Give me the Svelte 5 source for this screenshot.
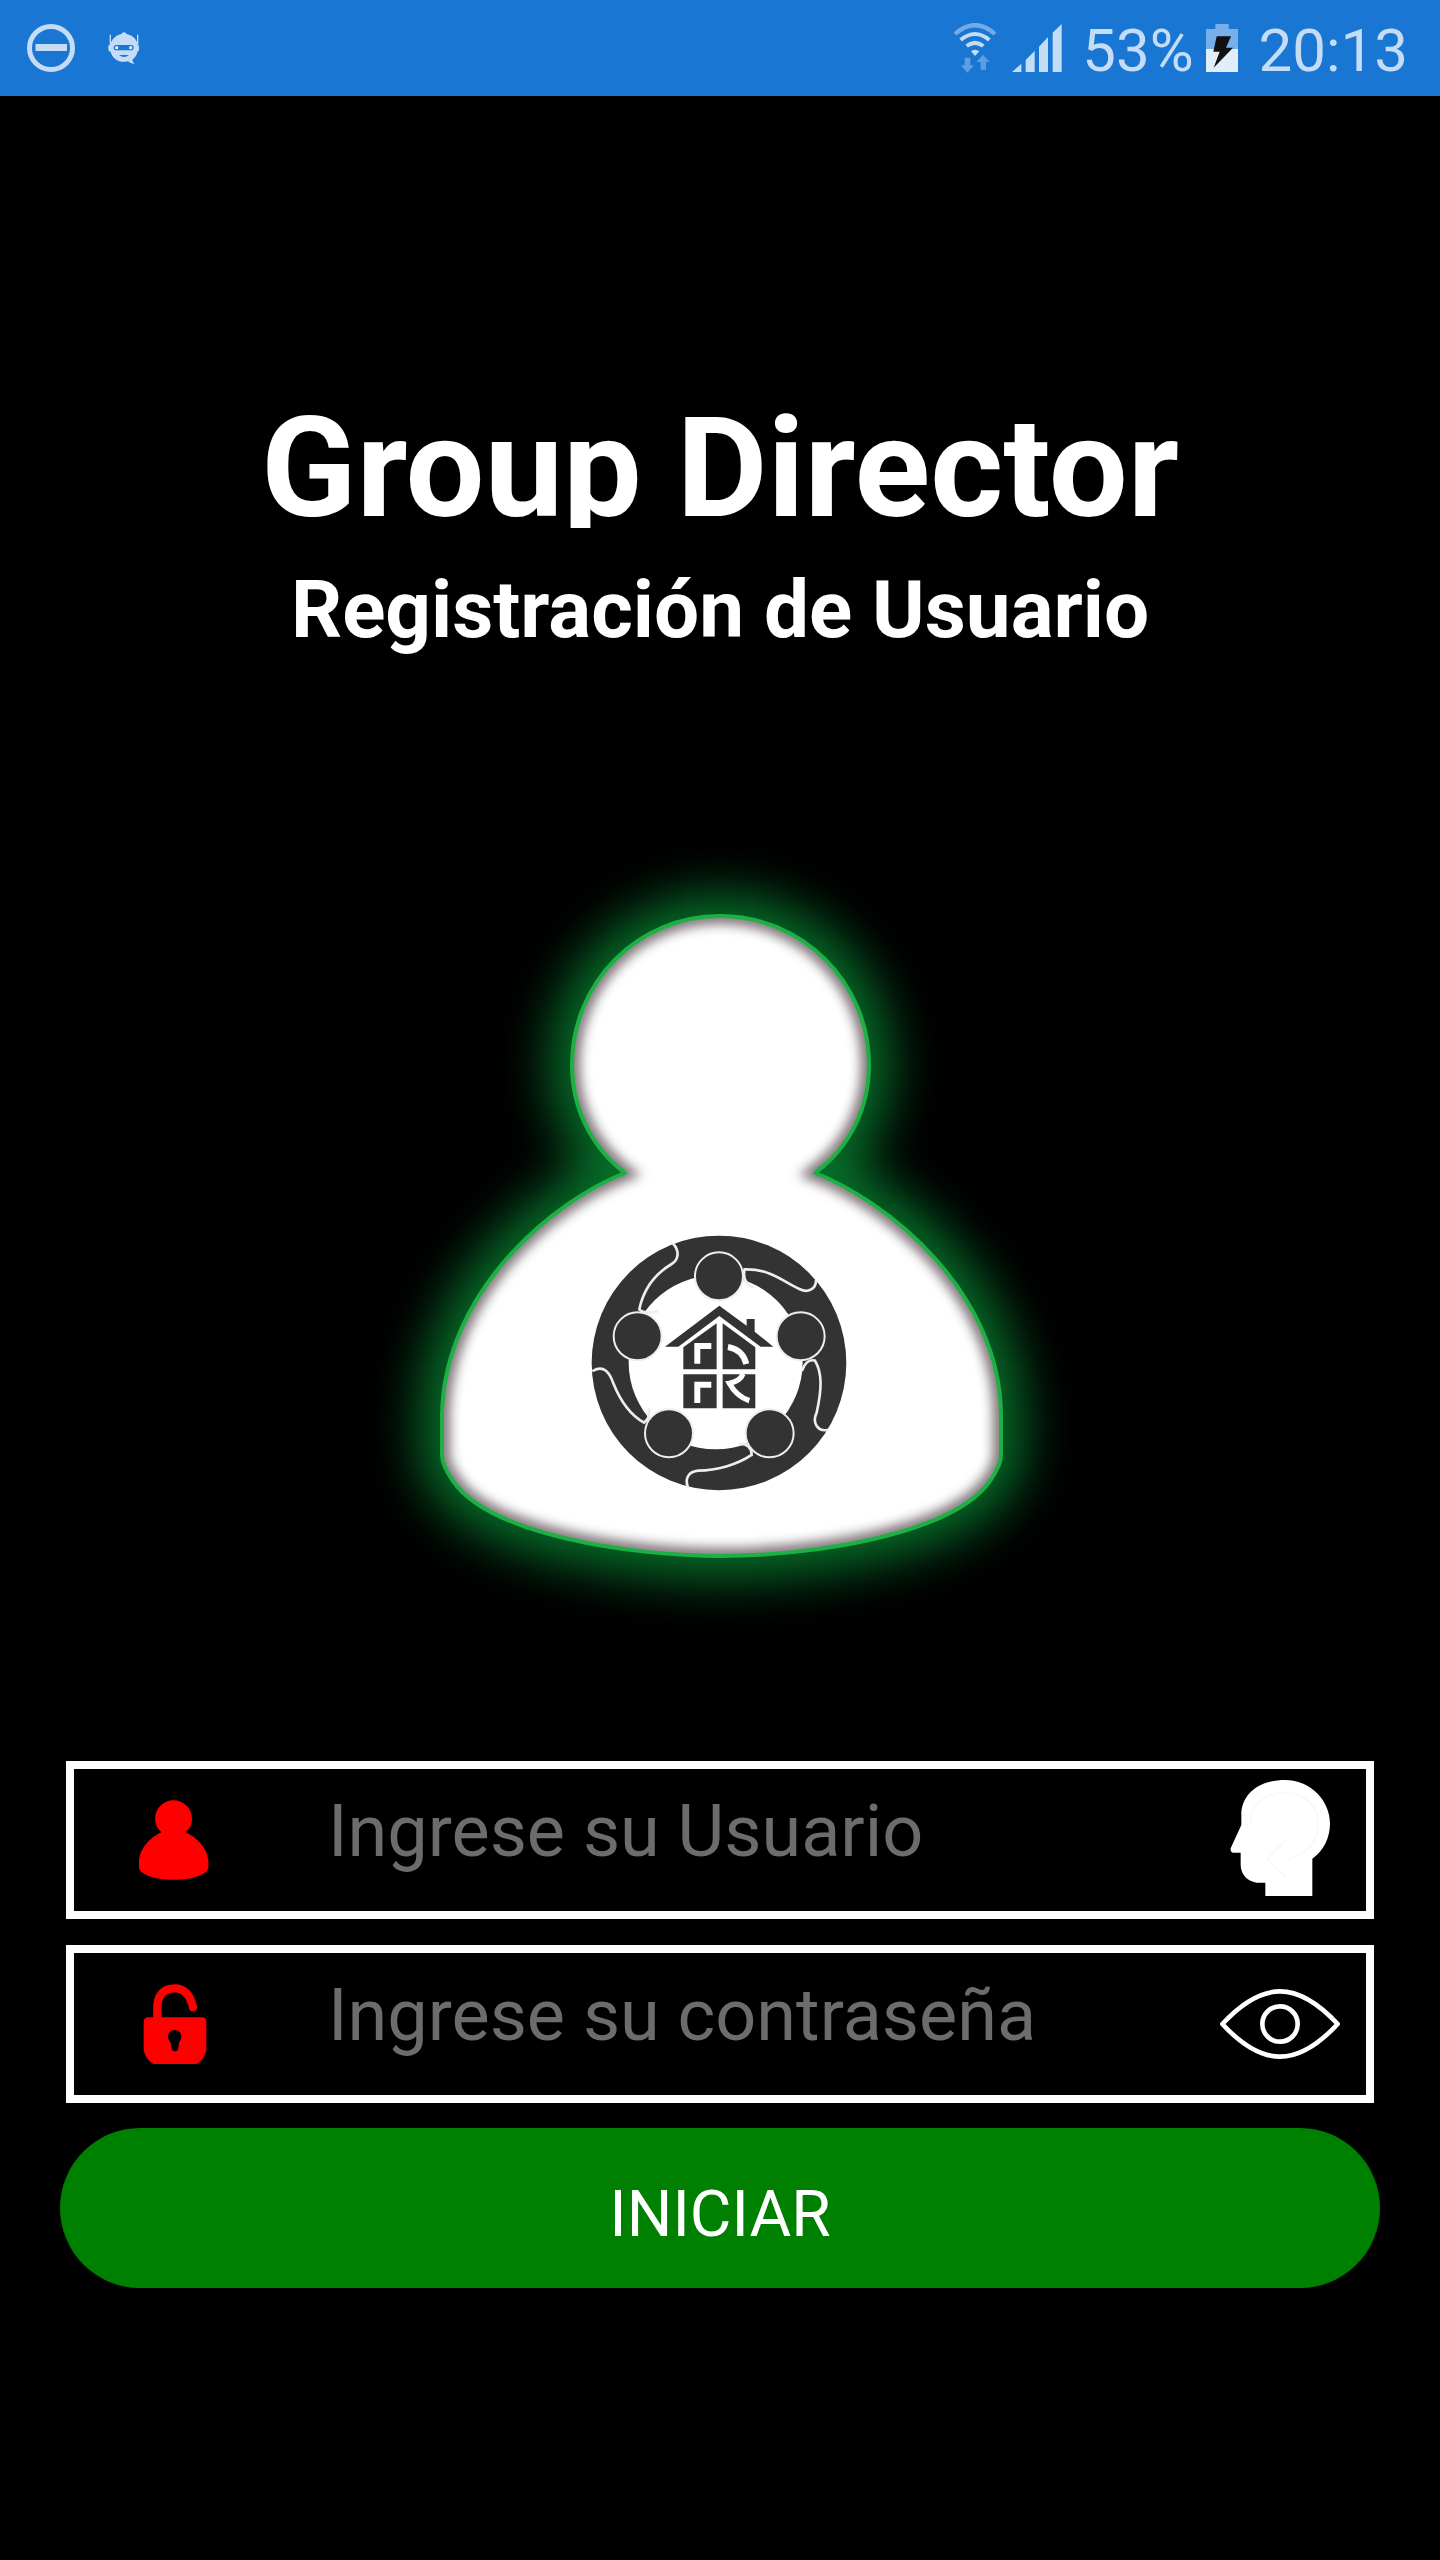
<script>
	let user = $state('');
	let password = $state('');
	let showPassword = $state(false);

	// same silhouette for the big logo and the user field
	const person =
		'M265 333C231 307 212 268 212 225C212 142 278 76 360 76C442 76 509 142 509 225C509 268 490 307 455 333C525 360 640 450 641 575V615C641 622 637 631 630 641C592 695 450 716 361 716C272 716 130 695 93 641C86 631 82 622 82 615V575C84 450 195 360 265 333Z';

	const heads = [
		[447, 199],
		[692, 379],
		[599, 670],
		[297, 670],
		[203, 379]
	];

	function submit(event) {
		event.preventDefault();
	}
</script>

<svelte:head>
	<title>Group Director</title>
</svelte:head>

<div class="app">
	<header class="status">
		<div class="status-side">
			<svg class="dnd" viewBox="0 0 48 48">
				<circle cx="24" cy="24" r="21.5" fill="none" stroke="#c5dcf6" stroke-width="5" />
				<path d="M8.500 20H40V27H8.500Z" fill="#c5dcf6" />
			</svg>
			<svg class="bot" viewBox="324 93 96 99">
				<g fill="#c5dcf6">
					<path d="M329 101H333V130H329ZM411 101H415V130H411Z" />
					<rect x="325" y="130" width="92" height="22" rx="8" />
					<path d="M364 99Q366 94 372 94T380 99C402 103 414 120 414 140C414 156 408 168 397 176Q398 183 404 188Q392 189 384 181C356 188 330 170 330 140C330 120 344 103 364 99Z" />
				</g>
				<rect x="341" y="132" width="60" height="16" rx="8" fill="#1976d2" />
				<circle cx="350" cy="140" r="5" fill="#e4effb" />
				<circle cx="392" cy="140" r="5" fill="#e4effb" />
				<path d="M357 162H387Q372 174 357 162Z" fill="#1976d2" />
			</svg>
		</div>
		<div class="status-side">
			<svg class="wifi" viewBox="70 68 132 150">
				<g fill="none" stroke="#c5dcf6">
					<path d="M76 101Q136 48 196 101" stroke="#72abe6" stroke-width="13" />
					<path d="M93 119Q136 83 179 119" stroke-width="12" />
					<path d="M111 137Q136 118 161 137" stroke-width="12" />
				</g>
				<path d="M124 153Q136 144 149 153L136 167Z" fill="#c5dcf6" />
				<path d="M105 172H122V195H133L113 217L93 195H105ZM153 208H169V185H180L160 163L140 185H153Z" fill="#5c9fe2" />
			</svg>
			<svg class="signal" viewBox="247 72 150 144">
				<path d="M247 216L275 191V216ZM288 180L315 153V216H288ZM328 140L355 111V216H328ZM369 98L396 72V216H369Z" fill="#c5dcf6" />
			</svg>
			<span class="percent">53%</span>
			<svg class="battery" viewBox="828 72 96 144">
				<path d="M828 87H856V72H896V87H924V147H828Z" fill="#76afe9" />
				<path d="M828 147H924V216H828Z" fill="#e2edfb" />
				<path d="M860 109H903L888 143H909L851 203L869 155H850Z" fill="#111" />
			</svg>
			<time>20:13</time>
		</div>
	</header>

	<main>
		<h1>Group Director</h1>
		<h2>Registración de Usuario</h2>

		<svg class="logo" viewBox="0 0 720 800" role="img" aria-label="Group Director">
			<defs>
				<filter id="glow" x="-30%" y="-30%" width="160%" height="160%" color-interpolation-filters="sRGB">
					<feGaussianBlur stdDeviation="25" />
				</filter>
				<filter id="edge" color-interpolation-filters="sRGB">
					<feGaussianBlur stdDeviation="6" />
				</filter>
				<clipPath id="body"><path d={person} /></clipPath>
			</defs>
			<path d={person} fill="#06702a" stroke="#06702a" stroke-width="44" stroke-linejoin="round" filter="url(#glow)" />
			<path d={person} fill="#fff" />
			<g clip-path="url(#body)">
				<path d={person} fill="none" stroke="#7d7277" stroke-width="16" filter="url(#edge)" />
			</g>
			<path d={person} fill="none" stroke="#1cb045" stroke-width="4" stroke-linejoin="round" />

			<!-- people holding hands round the house -->
			<g transform="translate(210 370) scale(0.3333)">
				<circle cx="447" cy="459" r="382" fill="#333" />
				<circle cx="437" cy="457" r="261" fill="#fff" />
				<g fill="none" stroke="#eee" stroke-width="8" stroke-linecap="round">
					<path d="M310 102C330 125 325 150 305 162C250 195 220 240 208 298Q222 312 262 304" />
					<path d="M738 212C738 235 715 250 690 238C640 215 600 176 524 178Q515 215 548 232" />
					<path d="M772 660C745 665 725 640 740 608C755 540 758 490 735 452Q710 445 697 480" />
					<path d="M353 830C345 805 355 785 385 782C440 782 500 765 545 735Q545 702 510 702" />
					<path d="M70 482C100 465 118 485 130 520C150 570 180 615 222 638Q240 625 238 598" />
				</g>
				{#each heads as [cx, cy]}
					<circle {cx} {cy} r="72" fill="#333" stroke="#eee" stroke-width="6" />
				{/each}
				<g fill="#333">
					<path d="M285 410L448 287L530 347V327H554V365L610 410H572L448 318L325 410Z" />
					<path d="M340 412L440 340V478H340ZM458 340L556 412V478H458ZM340 493H440V595H340ZM458 493H556V595H458Z" />
				</g>
				<g fill="none" stroke="#fff" stroke-width="18">
					<path d="M382 461V408H424M382 579V524H424" />
					<path d="M474 411C505 416 522 435 529 462" />
					<path d="M519 492Q510 514 478 520Q500 560 538 572" stroke-width="16" />
				</g>
			</g>
		</svg>

		<form onsubmit={submit}>
			<div class="field">
				<label for="user">
					<svg viewBox="42 74 644 644"><path d={person} fill="#f00" /></svg>
				</label>
				<input id="user" type="text" placeholder="Ingrese su Usuario" aria-label="Usuario" bind:value={user} />
				<button type="button" class="action" aria-label="Recordar usuario">
					<svg viewBox="120 120 360 360">
						<path d="M184 215C192 150 250 120 315 120C395 120 450 185 450 250C450 295 430 333 397 356V468H256V428H230C200 424 182 400 182 375V338H158Q150 335 152 325L184 255Z" fill="#fff" />
						<path d="M212 245C212 195 260 157 315 158C380 160 417 205 415 250C415 310 375 345 322 358M318 300L262 357L318 412" fill="none" stroke="#f9f9f9" stroke-width="6" />
					</svg>
				</button>
			</div>
			<div class="field">
				<label for="password">
					<svg viewBox="250 732 240 240">
						<path d="M320 845V803C320 765 340 745 372 745C405 745 420 770 427 802" fill="none" stroke="#f00" stroke-width="25" stroke-linecap="round" />
						<path d="M293 832H453Q467 832 467 848V930Q462 958 438 972H308Q284 958 279 930V848Q279 832 293 832Z" fill="#f00" />
						<path d="M372 870C384 870 392 879 392 890C392 899 384 906 384 914Q384 934 373 934T361 914C361 906 352 899 352 890C352 879 360 870 372 870Z" />
					</svg>
				</label>
				<input
					id="password"
					type={showPassword ? 'text' : 'password'}
					placeholder="Ingrese su contraseña"
					aria-label="Contraseña"
					bind:value={password}
				/>
				<button type="button" class="action" aria-label="Mostrar contraseña" onclick={() => (showPassword = !showPassword)}>
					<svg viewBox="120 672 360 360" fill="none" stroke="#fff" stroke-width="14" stroke-linejoin="round">
						<path d="M127 852C180 795 240 754 300 754S420 795 473 852C420 909 360 950 300 950S180 909 127 852Z" />
						<circle cx="300" cy="852" r="53" />
					</svg>
				</button>
			</div>
			<button type="submit" class="submit">INICIAR</button>
		</form>
	</main>
</div>

<style>
	:global(body) {
		background: #000;
	}
	.app {
		min-height: 100vh;
		background: #000;
		color: #fff;
		font-family: Roboto, sans-serif;
	}
	svg {
		display: block;
		flex: none;
	}
	.status {
		display: flex;
		justify-content: space-between;
		height: 96px;
		padding: 0 32px 0 27px;
		background: #1976d2;
		color: #c5dcf6;
		font-size: 60px;
		line-height: 60px;
	}
	.status-side {
		display: flex;
		align-items: center;
	}
	.status span,
	.status time {
		padding-top: 5px;
	}
	.dnd {
		width: 48px;
		height: 48px;
	}
	.bot {
		width: 32px;
		height: 33px;
		margin-left: 33px;
	}
	.wifi {
		width: 44px;
		height: 50px;
	}
	.signal {
		width: 50px;
		height: 48px;
		margin: 0 20px 0 15px;
	}
	.battery {
		width: 32px;
		height: 48px;
		margin: 0 21px 0 12px;
	}

	main {
		display: flex;
		flex-direction: column;
		align-items: center;
		padding-top: 302px;
	}
	h1,
	h2 {
		margin: 0;
		font-weight: 700;
		text-align: center;
	}
	h1 {
		height: 130px;
		overflow: hidden;
		font-size: 140px;
		line-height: 140px;
	}
	h2 {
		margin-top: 34px;
		font-size: 80px;
		line-height: 96px;
	}
	.logo {
		width: 50%;
		margin: 182px 0 120px;
	}

	form {
		display: flex;
		flex-direction: column;
		gap: 24px;
		box-sizing: border-box;
		width: 100%;
		padding: 0 60px;
	}
	.field {
		display: flex;
		align-items: center;
		box-sizing: border-box;
		height: 158px;
		margin: 1px 6px;
		padding: 0 26px 0 60px;
		border: 8px solid #fff;
	}
	.field label svg {
		width: 80px;
		height: 80px;
	}
	input {
		flex: 1;
		min-width: 0;
		height: 100%;
		box-sizing: border-box;
		margin-left: 114px;
		padding: 0 0 18px;
		border: 0;
		outline: none;
		background: none;
		color: #fff;
		font: 72px Roboto, sans-serif;
	}
	input::placeholder {
		color: #6c6c6c;
		opacity: 1;
	}
	.action {
		padding: 0;
		border: 0;
		background: none;
		cursor: pointer;
	}
	.action svg {
		width: 120px;
		height: 120px;
	}
	.submit {
		height: 160px;
		padding: 12px 0 0;
		border: 0;
		border-radius: 80px;
		background: #008000;
		color: #fff;
		font: 64px Roboto, sans-serif;
		cursor: pointer;
	}
</style>
